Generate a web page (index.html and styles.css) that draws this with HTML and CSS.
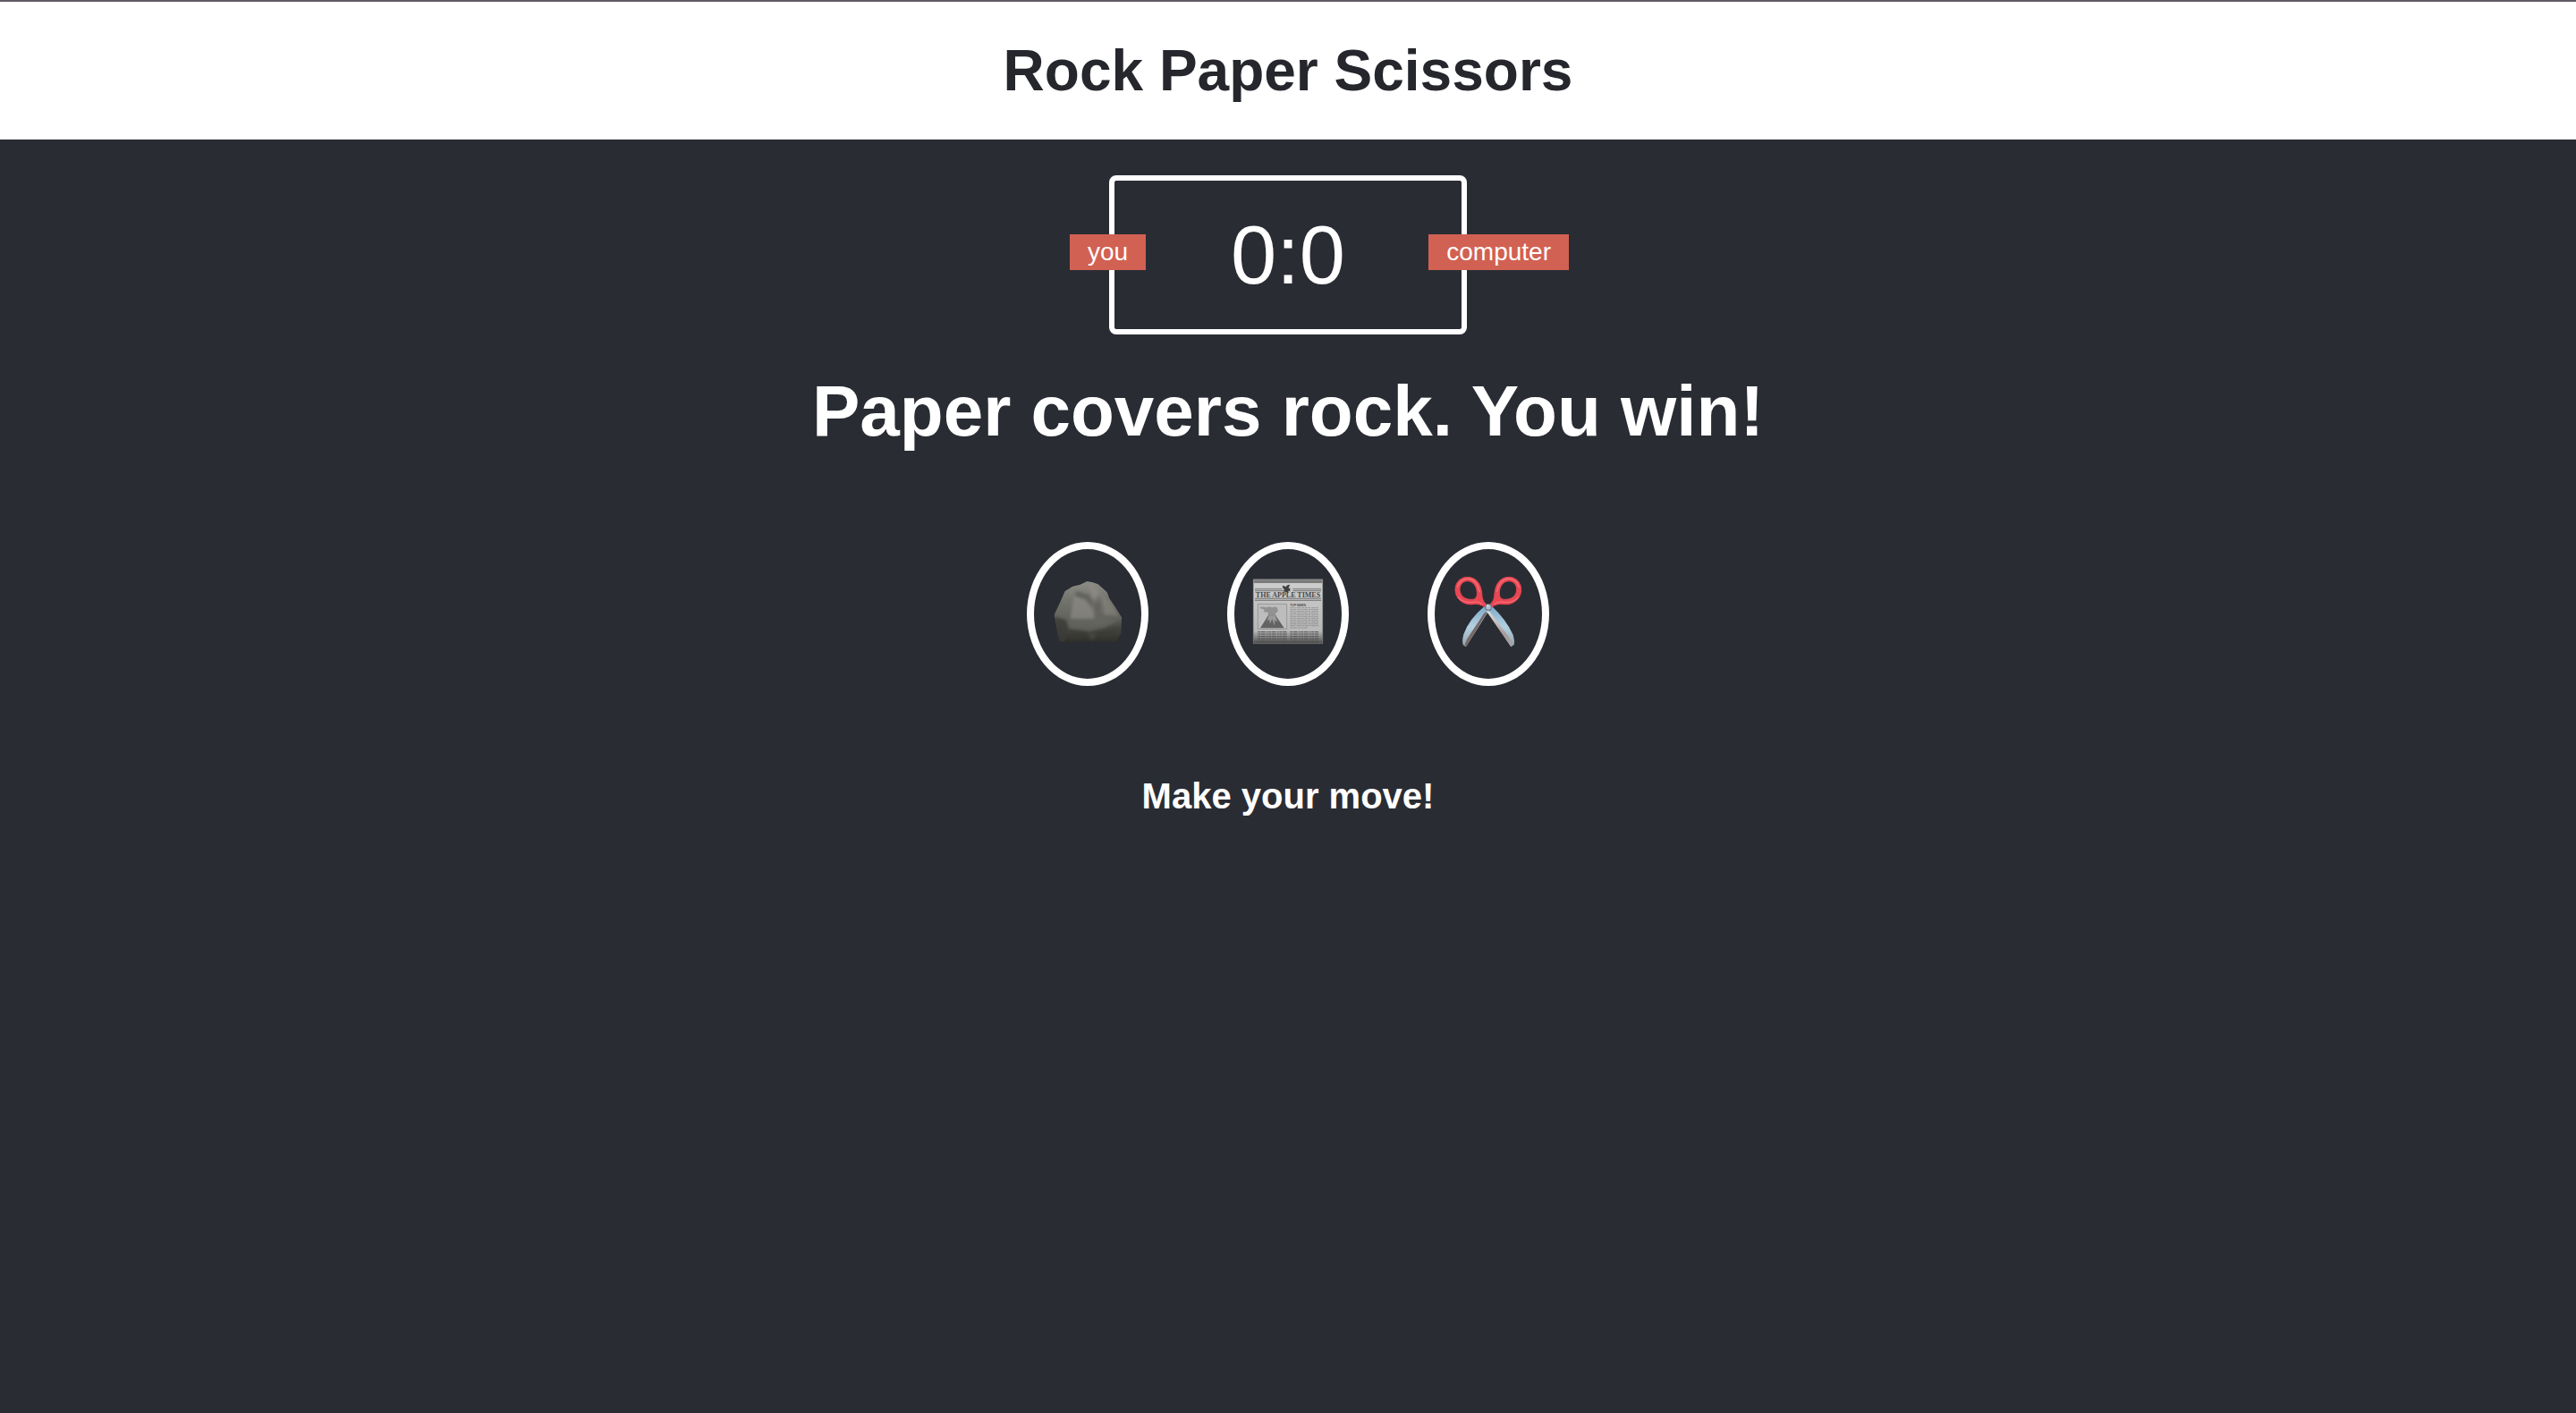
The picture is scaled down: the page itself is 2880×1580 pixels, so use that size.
FILE: index.html
```html
<!DOCTYPE html>
<html lang="en">
<head>
<meta charset="utf-8">
<title>Rock Paper Scissors</title>
<link rel="stylesheet" href="styles.css">
</head>
<body>
<header class="header">
  <h1 class="title">Rock Paper Scissors</h1>
</header>
<main class="game">
  <div class="score-board">
    <div class="badge badge-user">you</div>
    <div class="badge badge-computer">computer</div>
    <span>0</span>:<span>0</span>
  </div>
  <p class="result">Paper covers rock. You win!</p>
  <div class="choices">
    <button class="choice" type="button" aria-label="Rock">
      <svg class="icon" viewBox="108 132 240 240" aria-hidden="true">
        <defs>
          <linearGradient id="stone" x1="0" y1="0" x2="0" y2="1">
            <stop offset="0" stop-color="#8f8f88"/>
            <stop offset=".3" stop-color="#75756f"/>
            <stop offset=".6" stop-color="#64645e"/>
            <stop offset=".75" stop-color="#484843"/>
            <stop offset="1" stop-color="#2d2d29"/>
          </linearGradient>
          <clipPath id="stone-edge"><path d="M152 183L178 167L203 161L226 150L246 154L263 160L280 175L293 187L301 208L319 234L342 271L340 323L328 348L318 353H137L130 338L118 272L116 262L136 220Z"/></clipPath>
          <filter id="soft"><feGaussianBlur stdDeviation="4"/></filter>
        </defs>
        <g clip-path="url(#stone-edge)">
          <path fill="url(#stone)" d="M108 145h240v212H108z"/>
          <g filter="url(#soft)">
            <path fill="#5a5a54" opacity=".7" d="M190 182L232 196L248 232L220 210L186 200Z"/>
            <path fill="#8b8b84" opacity=".7" d="M182 200L218 213L246 246L252 276L170 276L176 232Z"/>
            <path fill="#8d8c85" opacity=".7" d="M228 158L246 160L270 190L262 224L242 198Z"/>
            <path fill="#82827b" opacity=".7" d="M272 190L304 220L330 264L284 262Z"/>
            <path fill="#52524c" opacity=".4" d="M262 190L274 228L262 260L250 232Z"/>
            <path fill="#3c3c37" opacity=".8" d="M112 268L154 280L162 314L150 360L110 350Z"/>
            <path fill="#6b6b64" opacity=".7" d="M162 280L280 276L330 280L284 306L236 318L166 308Z"/>
            <path fill="#4c4b43" opacity=".7" d="M226 318L262 326L240 350Z"/>
            <path fill="none" stroke="#34342f" stroke-width="3" opacity=".7" d="M118 272L156 284M168 316L230 322L286 316L338 308"/>
          </g>
        </g>
      </svg>
    </button>
    <button class="choice" type="button" aria-label="Paper">
      <svg class="icon" viewBox="108 132 240 240" aria-hidden="true">
        <defs>
          <linearGradient id="sheet" x1="0" y1="0" x2="0" y2="1">
            <stop offset="0" stop-color="#cecece"/>
            <stop offset=".8" stop-color="#b8b8b8"/>
            <stop offset=".91" stop-color="#7b7b7b"/>
            <stop offset="1" stop-color="#484848"/>
          </linearGradient>
        </defs>
        <path fill="url(#sheet)" d="M111 143h234v217H111z"/>
        <path fill="#7c7c7c" d="M113 145h230v11H113z"/>
        <path fill="none" stroke="#747474" stroke-width="3" d="M117 176h92M244 176h95M117 182h94M244 182h95M117 208h222M117 214h222"/>
        <path fill="#3f3f3f" d="M209 164q6 0 12 5 2-7 13-8-1 7-5 11l9 4-5 2 4 6-9-2 3 6-13-3-8-2 7-5q-7-3-8-14z"/>
        <text class="masthead" x="228" y="203" text-anchor="middle">THE APPLE TIMES</text>
        <path fill="#bdbdbd" stroke="#858585" stroke-width="2" d="M127 226h97v84h-97z"/>
        <path fill="#929292" d="M132 239q11-7 22-1 12-5 22 0 15-7 18 5 2 12-10 16l6 9h-25l-5-14-14-2 3-7z"/>
        <path fill="#626262" d="M135 307l29-46 9 5 11-5 31 46z"/>
        <path fill="#999" d="M165 262l-8 22 8-6 3 15 7-17 7 23 3-20 9 10-10-28-10 5z"/>
        <text class="headline" x="235" y="234">TOP NEWS</text>
        <g fill="none" stroke="#7c7c7c" stroke-width="2">
          <path stroke-dasharray="11 2 6 3 15 2 8 2" d="M235 239h95M235 251h95M235 263h95M235 275h95M235 287h95M235 299h95"/>
          <path stroke-dasharray="7 2 13 3 9 2" d="M235 245h95M235 257h95M235 269h95M235 281h95M235 293h95M235 306h60"/>
        </g>
        <path fill="none" stroke="#505050" stroke-width="3" stroke-dasharray="9 2 14 3 6 2" d="M127 320h97M235 320h95M127 327h97M235 327h95M127 335h97M235 335h95M127 343h97M235 343h95M127 351h97M235 351h95"/>
        <path fill="none" stroke="#777" stroke-width="2" d="M112 144h232v215H112z"/>
      </svg>
    </button>
    <button class="choice" type="button" aria-label="Scissors">
      <svg class="icon" viewBox="108 132 240 240" aria-hidden="true">
        <defs>
          <linearGradient id="steel" x1="0" y1="0" x2="0" y2="1">
            <stop offset="0" stop-color="#7fabc9"/>
            <stop offset=".5" stop-color="#b3d0e0"/>
            <stop offset="1" stop-color="#93a4af"/>
          </linearGradient>
          <linearGradient id="edge" x1="0" y1="0" x2="0" y2="1">
            <stop offset="0" stop-color="#e2e2e2"/>
            <stop offset=".65" stop-color="#a89a99"/>
            <stop offset="1" stop-color="#a6a6ab"/>
          </linearGradient>
        </defs>
        <path fill="url(#steel)" d="M214 235Q164 276 145 328Q139 349 143 363L153 370L231 246Z"/>
        <path fill="#786765" d="M229 246L153 370L149 361L157 343L213 258Z"/>
        <path fill="url(#steel)" d="M222 246L240 234Q286 276 310 328Q317 348 314 363L304 370Z"/>
        <path fill="url(#edge)" d="M219 247L230 249L292 330L309 354L304 370Z"/>
        <g fill="#e84753" stroke="#e84753" stroke-width="3" stroke-linejoin="round" fill-rule="evenodd">
          <path d="M160 136C134 135 116 155 117 181C119 208 142 230 174 227Q198 223 215 236L221 227Q206 216 206 190C203 158 186 137 160 136ZM160 149C177 150 190 168 190 188C191 205 183 212 170 211C147 211 133 197 132 179C131 162 143 148 160 149Z"/>
          <path d="M295 136C321 135 339 155 338 181C336 208 313 230 281 227Q257 223 240 236L234 227Q249 216 249 190C252 158 269 137 295 136ZM295 149C278 150 265 168 265 188C264 205 272 212 285 211C308 211 322 197 323 179C324 162 312 148 295 149Z"/>
        </g>
        <g fill="none" stroke="#ff7e83" stroke-width="4" stroke-linecap="round" opacity=".7">
          <path d="M124 170Q132 142 161 141Q189 144 198 184M126 203Q145 224 174 220Q192 216 206 226"/>
          <path d="M257 184Q266 144 294 141Q323 142 331 170M249 226Q263 216 281 220Q310 224 329 203"/>
        </g>
        <circle cx="228" cy="238" r="12" fill="#747f8c"/>
        <circle cx="228" cy="237" r="8" fill="#a9bfd4"/>
        <circle cx="226" cy="232" r="3" fill="#e4eef6"/>
      </svg>
    </button>
  </div>
  <p class="action">Make your move!</p>
</main>
</body>
</html>
```
FILE: styles.css
```css
* {
  box-sizing: border-box;
  margin: 0;
  padding: 0;
}

body {
  min-height: 100vh;
  background: #2a2c34;
  color: #fff;
  font-family: "Liberation Sans", Arial, sans-serif;
}

.header {
  padding: 40px;
  border-top: 2px solid #615c63;
  background: #fff;
  text-align: center;
}

.title {
  color: #25272d;
  font-size: 64px;
  line-height: 74px;
}

.game {
  display: flex;
  flex-direction: column;
  align-items: center;
  padding: 40px;
  text-align: center;
}

.score-board {
  position: relative;
  width: 400px;
  padding: 30px;
  border: 6px solid #fff;
  border-radius: 8px;
  font-size: 92px;
  line-height: 106px;
}

.badge {
  position: absolute;
  top: 60px;
  padding: 4px 20px;
  background: #d16153;
  font-size: 28px;
  line-height: 32px;
}

.badge-user {
  left: -50px;
}

.badge-computer {
  right: -120px;
}

.result {
  margin: 40px 0 100px;
  font-size: 80px;
  font-weight: bold;
  line-height: 92px;
}

.choices {
  display: flex;
  gap: 88px;
}

.choice {
  padding: 30px 20px 35px;
  border: 8px solid #fff;
  border-radius: 50%;
  background: none;
  cursor: pointer;
}

.icon {
  display: block;
  width: 80px;
  height: 80px;
}

.masthead {
  fill: #4a4a4a;
  font: bold 24px "Liberation Serif", serif;
}

.headline {
  fill: #4a4a4a;
  font: bold 10px "Liberation Sans", sans-serif;
}

.action {
  margin-top: 100px;
  font-size: 40px;
  font-weight: bold;
  line-height: 46px;
}
```
